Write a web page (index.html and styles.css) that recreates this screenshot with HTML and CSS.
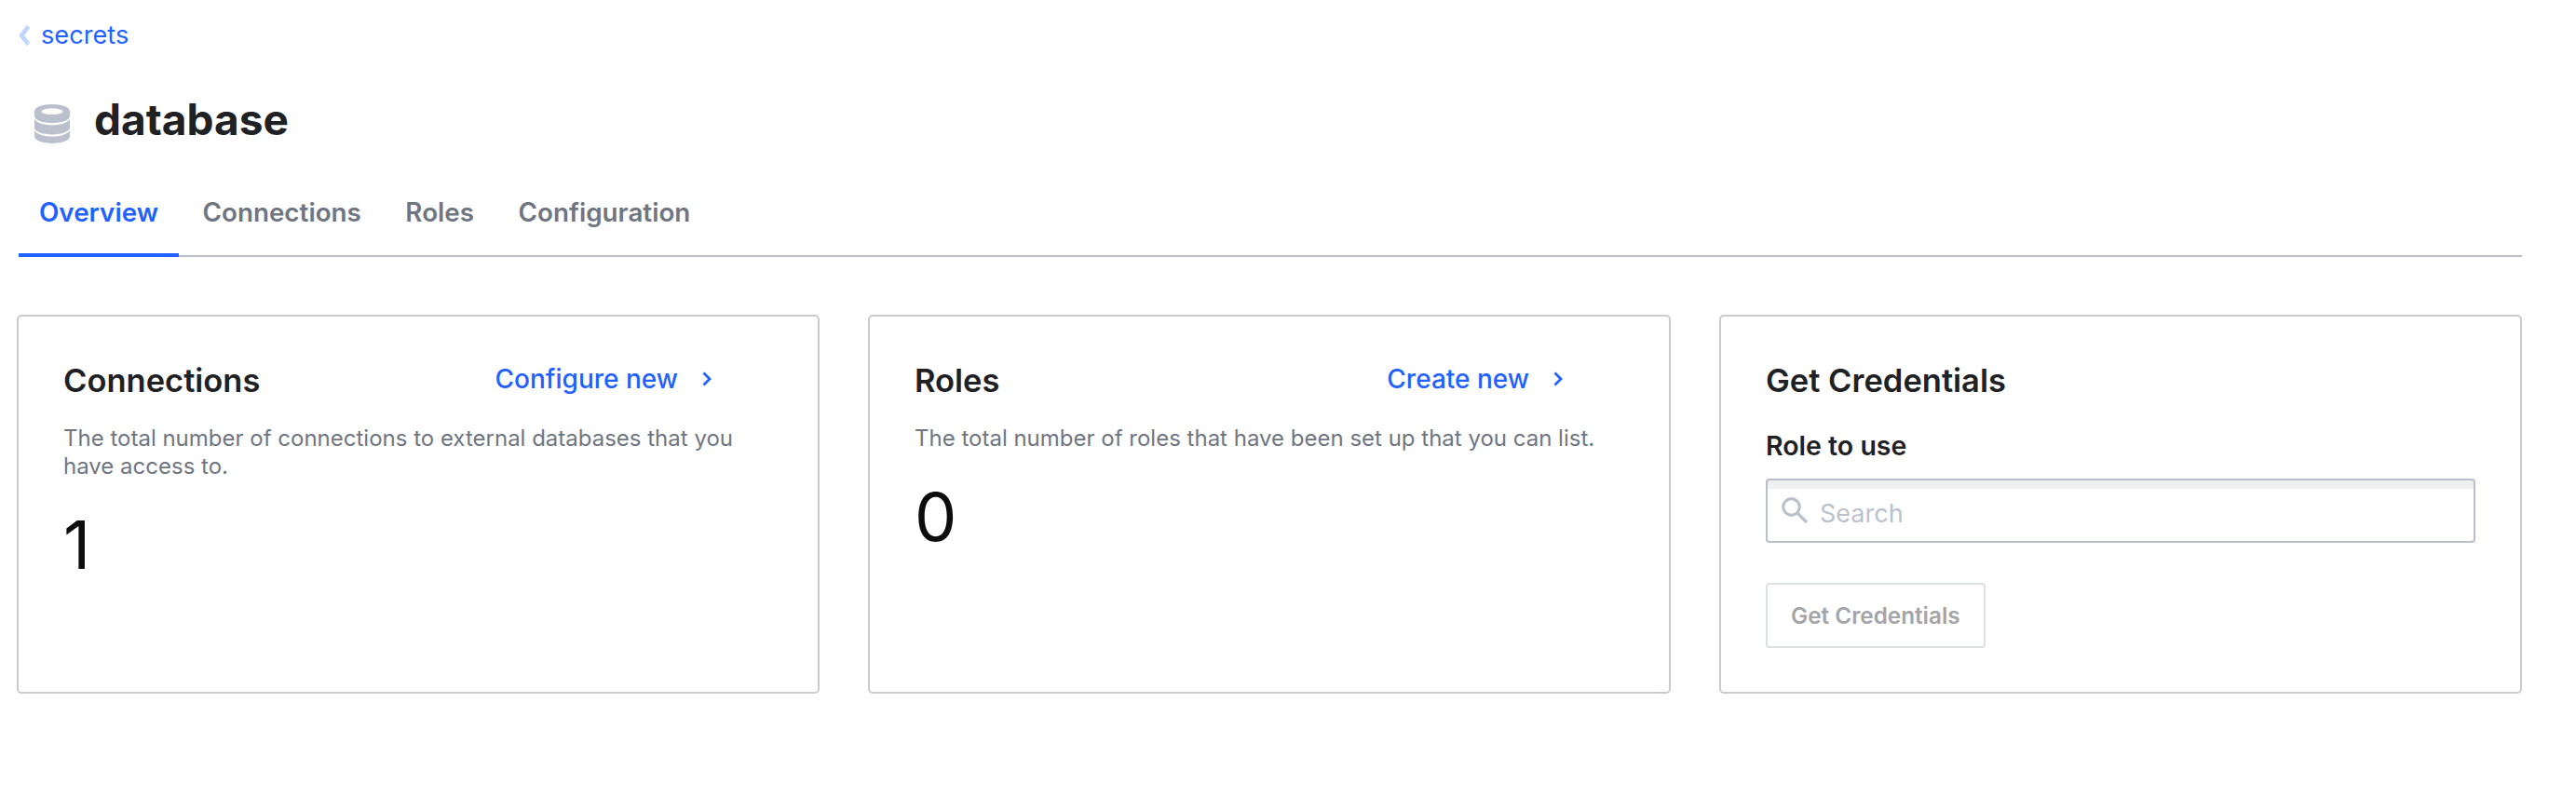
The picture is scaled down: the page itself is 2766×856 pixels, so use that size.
FILE: index.html
```html
<!DOCTYPE html>
<html lang="en">
<head>
  <meta charset="UTF-8" />
  <meta name="viewport" content="width=device-width, initial-scale=1.0" />
  <title>database - secrets</title>
  <link rel="stylesheet" href="styles.css">
</head>
<body>
  <div class="page">
    <nav class="breadcrumb">
      <svg class="crumb-icon" viewBox="0 0 14 22" width="14" height="22"><path d="M11.500 1.500 L4 11 L11.500 20.500" fill="none" stroke="#bfd4ff" stroke-width="4.500"/></svg>
      <a href="#">secrets</a>
    </nav>

    <header class="title-row">
      <svg class="db-icon" viewBox="0 0 40 44" width="38" height="42">
        <path fill-rule="evenodd" fill="#bac1cc" d="M20 0C9 0 0 3 0 8v5c0 5 9 8 20 8s20-3 20-8V8c0-5-9-8-20-8zM20 4.500c7 0 12 1.500 12 3.500s-5 3.500-12 3.500S8 10 8 8s5-3.500 12-3.500z"/>
        <path fill="#bac1cc" d="M0 17c3 4 11 6.500 20 6.500S37 21 40 17v9c0 5-9 8-20 8S0 31 0 26z"/>
        <path fill="#bac1cc" d="M0 30c3 4 11 6.500 20 6.500S37 34 40 30v6c0 5-9 8-20 8S0 41 0 36z"/>
      </svg>
      <h1>database</h1>
    </header>

    <div class="tabs">
      <a class="tab active" href="#">Overview</a>
      <a class="tab" href="#">Connections</a>
      <a class="tab" href="#">Roles</a>
      <a class="tab" href="#">Configuration</a>
    </div>

    <section class="cards">
      <div class="card">
        <div class="card-head">
          <h2>Connections</h2>
          <a class="card-link" href="#">Configure new
            <svg viewBox="0 0 12 18" width="12" height="18"><path d="M2.500 2.500 L9 9 L2.500 15.500" fill="none" stroke="#1f62ff" stroke-width="2.800"/></svg>
          </a>
        </div>
        <p class="desc">The total number of connections to external databases that you have access to.</p>
        <div class="count">1</div>
      </div>

      <div class="card">
        <div class="card-head">
          <h2>Roles</h2>
          <a class="card-link" href="#">Create new
            <svg viewBox="0 0 12 18" width="12" height="18"><path d="M2.500 2.500 L9 9 L2.500 15.500" fill="none" stroke="#1f62ff" stroke-width="2.800"/></svg>
          </a>
        </div>
        <p class="desc">The total number of roles that have been set up that you can list.</p>
        <div class="count">0</div>
      </div>

      <div class="card">
        <div class="card-head">
          <h2>Get Credentials</h2>
        </div>
        <label class="field-label" for="role">Role to use</label>
        <div class="search">
          <svg viewBox="0 0 30 30" width="30" height="30"><circle cx="11.500" cy="11.500" r="8.800" fill="none" stroke="#bac1cc" stroke-width="3.200"/><path d="M18 18 L28 28" stroke="#bac1cc" stroke-width="3.200"/></svg>
          <input id="role" type="text" placeholder="Search">
        </div>
        <button class="btn" disabled>Get Credentials</button>
      </div>
    </section>
  </div>
</body>
</html>
```

FILE: styles.css
```css
* {
  box-sizing: border-box;
}

body {
  margin: 0;
  background: #fff;
  font-family: Inter, "Noto Sans", sans-serif;
  color: #1f2125;
}

a {
  text-decoration: none;
}

.page {
  padding: 20px 58px 0 18px;
}

.breadcrumb {
  display: flex;
  align-items: center;
  gap: 11px;
  height: 34px;
  padding-left: 1px;
  font-size: 27.2px;
}

.breadcrumb a {
  color: #1f62ff;
}

.crumb-icon {
  margin-top: 2px;
}

.title-row {
  display: flex;
  align-items: center;
  gap: 26px;
  margin-top: 53px;
  padding-left: 19px;
  height: 44px;
}

.db-icon {
  margin-top: 7px;
}

.title-row h1 {
  margin: -2px 0 0;
  font-size: 46px;
  font-weight: 700;
  color: #1f2125;
}

.tabs {
  display: flex;
  gap: 3.5px;
  margin: 38px 0 0 2px;
  border-bottom: 2px solid #babfca;
  height: 87px;
}

.tab {
  display: flex;
  align-items: center;
  height: 87px;
  padding: 0 22px 10px;
  font-size: 27.8px;
  font-weight: 600;
  color: #6f7682;
}

.tab.active {
  color: #1f62ff;
  box-shadow: inset 0 -4px 0 #1f62ff;
}

.cards {
  display: grid;
  grid-template-columns: repeat(3, 1fr);
  gap: 52px;
  margin-top: 62px;
}

.card {
  height: 407px;
  padding: 48px;
  border: 2px solid #c9cbd0;
  border-radius: 5px;
}

.card-head {
  display: flex;
  justify-content: space-between;
  align-items: center;
  height: 40px;
}

.card-head h2 {
  margin: 0;
  font-size: 34.500px;
  font-weight: 600;
}

.card-link {
  display: flex;
  align-items: center;
  gap: 25px;
  margin: -2px 65px 0 0;
  font-size: 28px;
  font-weight: 500;
  color: #1f62ff;
}

.desc {
  margin: 28px 0 0;
  font-size: 24px;
  line-height: 30px;
  color: #6f7682;
}

.count {
  margin-top: 27px;
  font-size: 72px;
  line-height: 84px;
  color: #0c0c0c;
}

.field-label {
  display: block;
  margin-top: 33px;
  font-size: 28.500px;
  font-weight: 600;
}

.search {
  display: flex;
  align-items: center;
  gap: 10px;
  height: 69px;
  margin-top: 18px;
  padding: 5px 14px 0;
  border: 2px solid #babfca;
  border-radius: 4px;
  background: linear-gradient(#f0f0f1 0 8px, #fff 10px);
}

.search svg {
  margin-top: -7px;
}

.search input {
  flex: 1;
  border: none;
  outline: none;
  background: transparent;
  font-family: inherit;
  font-size: 27px;
}

.search input::placeholder {
  color: #bac1cc;
}

.btn {
  display: block;
  height: 70px;
  margin-top: 43px;
  padding: 0 25px;
  border: 2px solid #dcdfe3;
  border-radius: 4px;
  background: #fff;
  font-family: inherit;
  font-size: 24.300px;
  font-weight: 600;
  color: #a3a5a9;
}
```
